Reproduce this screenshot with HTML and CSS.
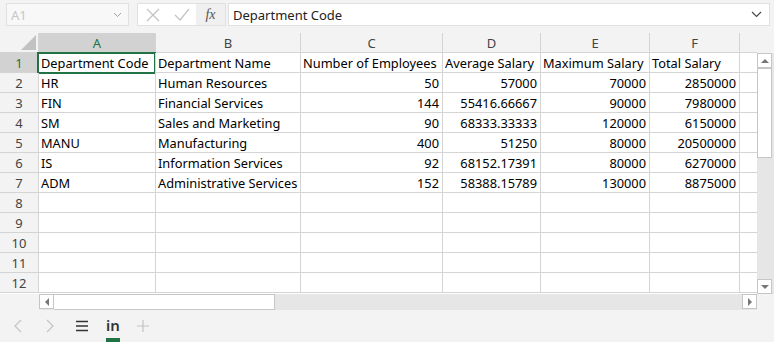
FILE: index.html
```html
<!DOCTYPE html>
<html lang="en">
<head>
    <meta charset="UTF-8">
    <title>in - Workbook</title>
    <link rel="stylesheet" href="styles.css">
</head>
<body>
    <div class="app">
        <!-- Formula bar -->
        <div class="formula-bar">
            <div class="name-box">
                <span>A1</span>
                <svg width="9" height="6" viewBox="0 0 9 6"><path d="M1 1l3.5 3.5L8 1" fill="none" stroke="#a0a0a0" stroke-width="1"/></svg>
            </div>
            <div class="fx-group">
                <div class="fx-btn">
                    <svg width="14" height="14" viewBox="0 0 14 14"><path d="M1 1l12 12M13 1L1 13" stroke="#c2c2c2" stroke-width="1.2"/></svg>
                </div>
                <div class="fx-btn">
                    <svg width="16" height="14" viewBox="0 0 16 14"><path d="M1 7l5 5L15 1" fill="none" stroke="#c2c2c2" stroke-width="1.2"/></svg>
                </div>
                <div class="fx-btn fx"><i>fx</i></div>
            </div>
            <div class="formula-input">
                <span>Department Code</span>
                <svg width="11" height="7" viewBox="0 0 11 7"><path d="M1 1l4.5 4.5L10 1" fill="none" stroke="#444" stroke-width="1.1"/></svg>
            </div>
        </div>

        <!-- Sheet -->
        <div class="sheet">
            <div class="grid" id="grid">
                <div class="corner"><span class="tri"></span></div>
                <div class="col-head active">A</div>
                <div class="col-head">B</div>
                <div class="col-head">C</div>
                <div class="col-head">D</div>
                <div class="col-head">E</div>
                <div class="col-head">F</div>
                <div class="col-head"></div>
            </div>
            <div class="vbar">
                <div class="vbar-top"></div>
                <div class="vtrack">
                    <div class="sbtn up"><span class="arr-up"></span></div>
                    <div class="vthumb"></div>
                    <div class="vfill"></div>
                    <div class="sbtn down"><span class="arr-down"></span></div>
                </div>
            </div>
        </div>

        <div class="hbar-row">
            <div class="hbar-left"></div>
            <div class="htrack">
                <div class="sbtn left"><span class="arr-left"></span></div>
                <div class="hthumb"></div>
                <div class="hfill"></div>
                <div class="sbtn right"><span class="arr-right"></span></div>
            </div>
            <div class="hbar-corner"></div>
        </div>

        <!-- Sheet tabs -->
        <div class="tabs">
            <svg class="tab-icon prev" width="10" height="14" viewBox="0 0 10 14"><path d="M8 1L2 7l6 6" fill="none" stroke="#c4c4c4" stroke-width="1.2"/></svg>
            <svg class="tab-icon next" width="10" height="14" viewBox="0 0 10 14"><path d="M2 1l6 6-6 6" fill="none" stroke="#c4c4c4" stroke-width="1.2"/></svg>
            <svg class="tab-icon menu" width="14" height="12" viewBox="0 0 14 12"><path d="M1 1.5h12M1 6h12M1 10.5h12" stroke="#333" stroke-width="1.3"/></svg>
            <div class="tab active">in</div>
            <svg class="tab-icon add" width="14" height="14" viewBox="0 0 14 14"><path d="M7 1v12M1 7h12" stroke="#c4c4c4" stroke-width="1.2"/></svg>
        </div>
    </div>

    <script>
        // Sheet data
        var rows = [
            ['Department Code', 'Department Name', 'Number of Employees', 'Average Salary', 'Maximum Salary', 'Total Salary'],
            ['HR', 'Human Resources', 50, 57000, 70000, 2850000],
            ['FIN', 'Financial Services', 144, '55416.66667', 90000, 7980000],
            ['SM', 'Sales and Marketing', 90, '68333.33333', 120000, 6150000],
            ['MANU', 'Manufacturing', 400, 51250, 80000, 20500000],
            ['IS', 'Information Services', 92, '68152.17391', 80000, 6270000],
            ['ADM', 'Administrative Services', 152, '58388.15789', 130000, 8875000]
        ];

        var grid = document.getElementById('grid');
        for (var r = 0; r < 12; r++) {
            var head = document.createElement('div');
            head.className = 'row-head' + (r === 0 ? ' active' : '');
            head.textContent = r + 1;
            grid.appendChild(head);
            for (var c = 0; c < 7; c++) {
                var cell = document.createElement('div');
                cell.className = 'cell';
                var val = rows[r] ? rows[r][c] : undefined;
                if (val !== undefined) {
                    cell.textContent = val;
                    if (r > 0 && c > 1) cell.classList.add('num');
                }
                if (r === 0 && c === 0) cell.classList.add('selected');
                grid.appendChild(cell);
            }
        }
    </script>
</body>
</html>
```

FILE: styles.css
```css
* {
    margin: 0;
    padding: 0;
    box-sizing: border-box;
}

body {
    background: #f3f3f3;
    font-family: 'Noto Sans', 'Open Sans', sans-serif;
    color: #000;
    width: 774px;
    height: 342px;
    overflow: hidden;
}

.app {
    display: flex;
    flex-direction: column;
    width: 774px;
    height: 342px;
}

/* Formula Bar */
.formula-bar {
    height: 33px;
    display: flex;
    align-items: flex-start;
    padding: 3px 4px 0 6px;
    gap: 8px;
}

.name-box {
    width: 123px;
    height: 23px;
    border: 1px solid #e1e1e1;
    background: #f8f8f8;
    display: flex;
    align-items: center;
    justify-content: space-between;
    padding: 0 6px 0 4px;
    font-size: 13px;
    color: #c6c6c6;
}

.fx-group {
    display: flex;
    height: 23px;
    border: 1px solid #e1e1e1;
    background: #fff;
}

.fx-btn {
    width: 29px;
    display: flex;
    align-items: center;
    justify-content: center;
}

.fx-btn.fx {
    background: #f0f0f0;
    font-family: 'Liberation Serif', serif;
    font-size: 14px;
    color: #555;
}

.formula-input {
    flex: 1;
    height: 23px;
    border: 1px solid #e1e1e1;
    background: #fff;
    display: flex;
    align-items: center;
    justify-content: space-between;
    padding: 0 7px 0 4px;
    font-size: 13px;
    color: #222;
    margin-left: -6px;
}

/* Sheet */
.sheet {
    display: flex;
    height: 261px;
}

.grid {
    width: 757px;
    display: grid;
    grid-template-columns: 38px 117px 145px 142px 98px 109px 90px 18px;
    grid-template-rows: repeat(13, 20px);
    align-content: start;
    background: #fff;
    overflow: hidden;
}

.corner,
.col-head,
.row-head {
    background: #f3f3f3;
    color: #444;
    font-size: 13px;
    display: flex;
    align-items: center;
    justify-content: center;
    border-bottom: 1px solid #d4d4d4;
}

.col-head {
    border-left: 1px solid #d4d4d4;
}

.row-head {
    padding-top: 1px;
}

.col-head.active,
.row-head.active {
    background: #d2d2d2;
    color: #217346;
}

.corner {
    justify-content: flex-end;
    align-items: flex-end;
    padding: 0 2px 2px 0;
}

.tri {
    width: 0;
    height: 0;
    border-left: 15px solid transparent;
    border-bottom: 15px solid #c2c2c2;
}

.cell {
    border-left: 1px solid #d4d4d4;
    border-bottom: 1px solid #d4d4d4;
    font-size: 12.8px;
    line-height: 19px;
    padding: 1px 3px 0 2px;
    white-space: nowrap;
    overflow: hidden;
}

.cell.num {
    text-align: right;
}

.cell.selected {
    outline: 2px solid #217346;
    outline-offset: -1px;
}

/* Vertical scrollbar */
.vbar {
    width: 17px;
    display: flex;
    flex-direction: column;
}

.vbar-top {
    height: 20px;
    background: #f3f3f3;
}

.vtrack {
    flex: 1;
    background: #e6e6e6;
    display: flex;
    flex-direction: column;
    padding: 0 2px 0 0;
}

.vthumb {
    height: 90px;
    background: #fff;
    border: 1px solid #c6c6c6;
}

.vfill {
    flex: 1;
}

.sbtn {
    width: 15px;
    height: 15px;
    background: #fff;
    border: 1px solid #c6c6c6;
    display: flex;
    align-items: center;
    justify-content: center;
}

.arr-up {
    border-left: 4px solid transparent;
    border-right: 4px solid transparent;
    border-bottom: 4px solid #777;
}

.arr-down {
    border-left: 4px solid transparent;
    border-right: 4px solid transparent;
    border-top: 4px solid #777;
}

.arr-left {
    border-top: 4px solid transparent;
    border-bottom: 4px solid transparent;
    border-right: 4px solid #777;
}

.arr-right {
    border-top: 4px solid transparent;
    border-bottom: 4px solid transparent;
    border-left: 4px solid #777;
}

/* Horizontal scrollbar */
.hbar-row {
    display: flex;
    height: 16px;
}

.hbar-left {
    width: 39px;
}

.htrack {
    width: 718px;
    background: #e6e6e6;
    display: flex;
}

.hthumb {
    width: 221px;
    background: #fff;
    border: 1px solid #c6c6c6;
    border-left: none;
}

.hfill {
    flex: 1;
}

.hbar-corner {
    width: 17px;
}

/* Sheet tabs */
.tabs {
    flex: 1;
    display: flex;
    align-items: center;
    padding: 0 0 0 13px;
}

.tab-icon {
    flex: none;
}

.tab-icon.next {
    margin-left: 22px;
}

.tab-icon.menu {
    margin-left: 20px;
}

.tab {
    margin-left: 17px;
    height: 32px;
    font-size: 15px;
    font-weight: 600;
    color: #333;
    padding: 0;
    border-bottom: 4px solid #217346;
    line-height: 30px;
}

.tab-icon.add {
    margin-left: 16px;
}
```
